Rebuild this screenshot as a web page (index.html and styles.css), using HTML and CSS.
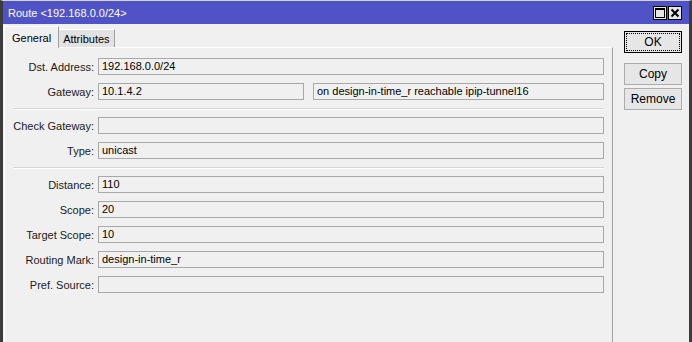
FILE: index.html
```html
<!DOCTYPE html>
<html lang="en">
  <head>
    <meta charset="UTF-8" />
    <title>Route &lt;192.168.0.0/24&gt;</title>
    <link rel="stylesheet" href="styles.css">
  </head>
  <body>
    <div class="window">
      <div class="titlebar">
        <span class="title">Route &lt;192.168.0.0/24&gt;</span>
        <div class="title-btns">
          <span class="tbtn">
            <svg width="10" height="10" viewBox="0 0 10 10">
              <rect x="0.5" y="0.5" width="9" height="9" fill="none" stroke="#000" />
              <rect x="0" y="0" width="10" height="2" fill="#000" />
            </svg>
          </span>
          <span class="tbtn">
            <svg width="10" height="10" viewBox="0 0 10 10">
              <path d="M1.5 1.5 L8.5 8.5 M8.5 1.5 L1.5 8.5" stroke="#000" stroke-width="2" />
            </svg>
          </span>
        </div>
      </div>

      <div class="main">
        <div class="left">
          <div class="tabs">
            <div class="tab active">General</div>
            <div class="tab">Attributes</div>
          </div>

          <!-- General tab -->
          <div class="panel">
            <div class="row">
              <label>Dst. Address:</label>
              <div class="field">192.168.0.0/24</div>
            </div>
            <div class="row">
              <label>Gateway:</label>
              <div class="pair">
                <div class="field gw">10.1.4.2</div>
                <div class="field">on design-in-time_r reachable ipip-tunnel16</div>
              </div>
            </div>
            <div class="sep"></div>
            <div class="row">
              <label>Check Gateway:</label>
              <div class="field"></div>
            </div>
            <div class="row">
              <label>Type:</label>
              <div class="field">unicast</div>
            </div>
            <div class="sep"></div>
            <div class="row">
              <label>Distance:</label>
              <div class="field">110</div>
            </div>
            <div class="row">
              <label>Scope:</label>
              <div class="field">20</div>
            </div>
            <div class="row">
              <label>Target Scope:</label>
              <div class="field">10</div>
            </div>
            <div class="row">
              <label>Routing Mark:</label>
              <div class="field">design-in-time_r</div>
            </div>
            <div class="row">
              <label>Pref. Source:</label>
              <div class="field"></div>
            </div>
          </div>
        </div>

        <div class="side">
          <button class="btn ok">OK</button>
          <button class="btn copy">Copy</button>
          <button class="btn remove">Remove</button>
        </div>
      </div>
    </div>
  </body>
</html>
```

FILE: styles.css
```css
body {
  margin: 0;
  padding: 0;
  background-color: #f0f0f0;
  font-family: "Liberation Sans", Arial, sans-serif;
  font-size: 11px;
  color: #000;
  overflow: hidden;
}

.window {
  height: 342px;
  box-sizing: border-box;
  border-top: 1px solid #d4d4d4;
  border-left: 3px solid #3c3c3c;
  border-right: 3px solid #3c3c3c;
  display: flex;
  flex-direction: column;
}

.titlebar {
  height: 23px;
  background-color: #4f53c6;
  color: #fff;
  display: flex;
  align-items: center;
  justify-content: space-between;
  padding-left: 5px;
  flex-shrink: 0;
}

.title {
  font-size: 11px;
}

.title-btns {
  display: flex;
  gap: 1px;
  margin-right: 7px;
}

.tbtn {
  width: 12px;
  height: 12px;
  border: 1px solid #000;
  background-color: #e6e6e6;
  display: flex;
  align-items: center;
  justify-content: center;
}

.main {
  flex: 1;
  display: flex;
  min-height: 0;
}

.left {
  width: 609px;
  margin-left: 1px;
  display: flex;
  flex-direction: column;
}

.tabs {
  display: flex;
  align-items: flex-end;
  padding-top: 1px;
  height: 22px;
}

.tab {
  box-sizing: border-box;
  display: flex;
  align-items: center;
}

.tab.active {
  height: 22px;
  padding: 0 7px;
  background-color: #f0f0f0;
  border-top: 1px solid #fff;
  border-left: 1px solid #fff;
  border-right: 1px solid #a0a0a0;
  position: relative;
  top: 1px;
}

.tab:not(.active) {
  height: 18px;
  padding: 0 4px;
  background-color: #e2e2e2;
  border-top: 1px solid #fff;
  border-right: 1px solid #a0a0a0;
}

.panel {
  flex: 1;
  border-top: 1px solid #fff;
  border-left: 1px solid #fff;
  border-right: 1px solid #a0a0a0;
  padding: 10px 8px 0 0;
}

.row {
  display: grid;
  grid-template-columns: 89px 1fr;
  column-gap: 4px;
  align-items: center;
  height: 17px;
  margin-bottom: 8px;
}

.row label {
  text-align: right;
  color: #1a1a1a;
}

.field {
  box-sizing: border-box;
  height: 17px;
  border: 1px solid #a8a8a8;
  background-color: #f0f0f0;
  padding: 0 3px;
  line-height: 15px;
  white-space: nowrap;
  overflow: hidden;
}

.pair {
  display: flex;
  gap: 9px;
}

.pair .gw {
  width: 206px;
  flex-shrink: 0;
}

.pair .field:last-child {
  flex: 1;
}

.sep {
  margin: 3px 0 7px 8px;
  height: 1px;
  background-color: #d7d7d7;
  border-bottom: 1px solid #fff;
}

.side {
  flex: 1;
  display: flex;
  flex-direction: column;
  padding: 7px 0 0 11px;
}

.btn {
  width: 58px;
  height: 22px;
  box-sizing: border-box;
  font-family: "Liberation Sans", Arial, sans-serif;
  font-size: 12px;
  background-color: #e6e6e6;
  border: 1px solid #acacac;
  color: #000;
  padding: 0;
}

.btn.ok {
  border-color: #000;
  outline: 1px dotted #000;
  outline-offset: -3px;
}

.btn.copy {
  margin-top: 10px;
}

.btn.remove {
  margin-top: 3px;
}
```
